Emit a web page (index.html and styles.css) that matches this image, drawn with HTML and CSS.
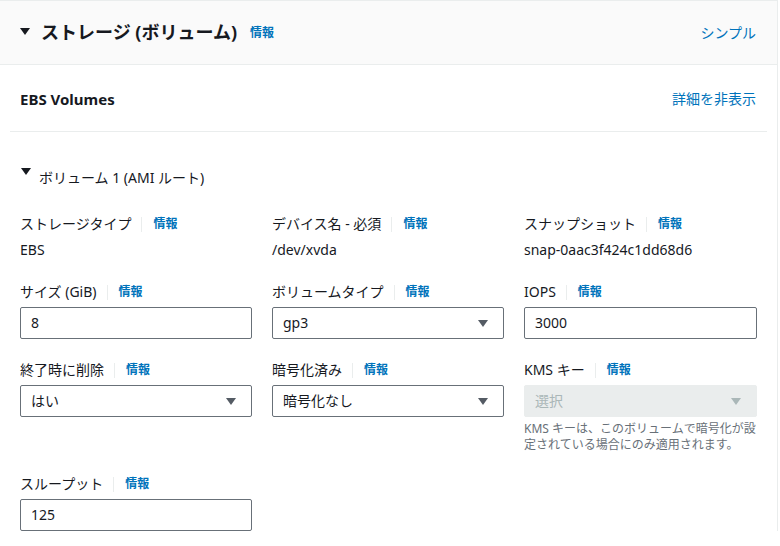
FILE: index.html
```html
<!DOCTYPE html>
<html lang="ja">
<head>
<meta charset="utf-8">
<link rel="stylesheet" href="styles.css">
</head>
<body>
<div class="panel">
  <div class="panel-header">
    <div class="title-group">
      <span class="caret caret-lg"></span>
      <h2 class="title">ストレージ (ボリューム)</h2>
      <a class="info info-title">情報</a>
    </div>
    <a class="link">シンプル</a>
  </div>
  <div class="panel-body">
    <div class="sub-header">
      <h3 class="sub-title">EBS Volumes</h3>
      <a class="link">詳細を非表示</a>
    </div>
    <div class="divider"></div>
    <div class="volume">
      <div class="volume-head">
        <span class="caret caret-sm"></span>
        <span class="volume-title">ボリューム 1 (AMI ルート)</span>
      </div>
      <div class="grid">
        <div class="field">
          <div class="label"><span>ストレージタイプ</span><span class="sep"></span><a class="info">情報</a></div>
          <div class="value">EBS</div>
        </div>
        <div class="field">
          <div class="label"><span>デバイス名 - 必須</span><span class="sep"></span><a class="info">情報</a></div>
          <div class="value">/dev/xvda</div>
        </div>
        <div class="field">
          <div class="label"><span>スナップショット</span><span class="sep"></span><a class="info">情報</a></div>
          <div class="value">snap-0aac3f424c1dd68d6</div>
        </div>

        <div class="field">
          <div class="label"><span>サイズ (GiB)</span><span class="sep"></span><a class="info">情報</a></div>
          <div class="input">8</div>
        </div>
        <div class="field">
          <div class="label"><span>ボリュームタイプ</span><span class="sep"></span><a class="info">情報</a></div>
          <div class="input select">gp3<span class="arrow"></span></div>
        </div>
        <div class="field">
          <div class="label"><span>IOPS</span><span class="sep"></span><a class="info">情報</a></div>
          <div class="input">3000</div>
        </div>

        <div class="field">
          <div class="label"><span>終了時に削除</span><span class="sep"></span><a class="info">情報</a></div>
          <div class="input select">はい<span class="arrow"></span></div>
        </div>
        <div class="field">
          <div class="label"><span>暗号化済み</span><span class="sep"></span><a class="info">情報</a></div>
          <div class="input select">暗号化なし<span class="arrow"></span></div>
        </div>
        <div class="field">
          <div class="label"><span>KMS キー</span><span class="sep"></span><a class="info">情報</a></div>
          <div class="input select disabled">選択<span class="arrow"></span></div>
          <div class="hint">KMS キーは、このボリュームで暗号化が設定されている場合にのみ適用されます。</div>
        </div>

        <div class="field">
          <div class="label"><span>スループット</span><span class="sep"></span><a class="info">情報</a></div>
          <div class="input">125</div>
        </div>
      </div>
    </div>
  </div>
</div>
</body>
</html>
```
FILE: styles.css
```css
* { box-sizing: border-box; }
html, body { margin: 0; padding: 0; background: #fff; }
body {
  font-family: "Noto Sans", "Noto Sans CJK JP", sans-serif;
  font-size: 14px;
  color: #16191f;
  width: 780px;
  height: 546px;
  overflow: hidden;
}
a { text-decoration: none; cursor: pointer; }
.panel {
  width: 778px;
  border-top: 1px solid #eaeded;
  border-right: 1px solid #eaeded;
}
.panel-header {
  height: 64px;
  background: #fafafa;
  border-bottom: 1px solid #eaeded;
  display: flex;
  align-items: center;
  justify-content: space-between;
  padding: 0 21px 0 20px;
}
.title-group { display: flex; align-items: center; }
.caret {
  display: inline-block;
  width: 0; height: 0;
  border-left: 5px solid transparent;
  border-right: 5px solid transparent;
  border-top: 7px solid #16191f;
}
.caret-lg { margin: 0 11px 0 0; position: relative; top: -1px; }
.title {
  margin: 0;
  font-size: 18px;
  font-weight: 700;
  line-height: 24px;
  position: relative;
  top: -1px;
}
.info {
  color: #0073bb;
  font-size: 12px;
  font-weight: 700;
  line-height: 20px;
}
.info-title { margin-left: 13px; }
.link { color: #0073bb; font-size: 14px; line-height: 22px; }
.panel-body { padding: 0 10px; }
.sub-header {
  display: flex;
  justify-content: space-between;
  align-items: center;
  padding: 23px 11px 21px 10px;
  height: 66px;
}
.sub-title { margin: 0; font-size: 15px; font-weight: 700; line-height: 22px; }
.divider { height: 1px; background: #eaeded; }
.volume { padding: 0 10px; }
.volume-head {
  display: flex;
  align-items: flex-start;
  margin-top: 34px;
  height: 22px;
}
.caret-sm { margin: 2px 8px 0 1px; }
.volume-title { line-height: 22px; position: relative; top: 1px; }
.grid {
  display: grid;
  grid-template-columns: 232px 232px 233px;
  column-gap: 20px;
  row-gap: 20px;
  margin-top: 25px;
}
.label {
  display: flex;
  align-items: center;
  line-height: 22px;
  height: 22px;
  margin-bottom: 4px;
}
.sep {
  display: inline-block;
  width: 1px;
  height: 15px;
  background: #eaeded;
  margin: 0 11px 0 10px;
}
.value { line-height: 22px; }
.input {
  height: 32px;
  border: 1px solid #687078;
  border-radius: 2px;
  padding: 0 10px;
  line-height: 30px;
  position: relative;
  background: #fff;
}
.select .arrow {
  position: absolute;
  right: 15px;
  top: 12px;
  width: 0; height: 0;
  border-left: 5px solid transparent;
  border-right: 5px solid transparent;
  border-top: 7px solid #545b64;
}
.disabled {
  background: #eaeded;
  border-color: #eaeded;
  color: #aab7b8;
}
.disabled .arrow { border-top-color: #aab7b8; }
.hint {
  margin-top: 4px;
  font-size: 12px;
  line-height: 16px;
  color: #687078;
}
```
